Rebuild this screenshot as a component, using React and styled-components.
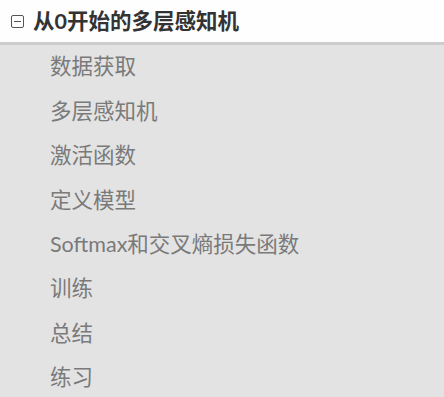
import React from "react";
import styled, { createGlobalStyle } from "styled-components";

const Global = createGlobalStyle`
  html, body { margin: 0; padding: 0; background: #e3e3e3; }
  body { font-family: "Lato", "Noto Sans CJK SC", sans-serif; }
`;

const Panel = styled.div`
  width: 444px;
  height: 397px;
  background: #e3e3e3;
  overflow: hidden;
  display: flex;
  flex-direction: column;
`;

const Header = styled.div`
  flex: none;
  height: 42px;
  background: #fefefe;
  border-bottom: 3px solid #cdcdcd;
  display: flex;
  align-items: center;
  padding-left: 11px;
  gap: 9px;
  box-sizing: content-box;
`;

const Toggle = styled.span`
  width: 11px;
  height: 11px;
  border: 1px solid #555;
  border-radius: 2px;
  position: relative;
  flex: none;
  margin-top: 1px;
  &::after {
    content: "";
    position: absolute;
    left: 2px;
    right: 2px;
    top: 5px;
    height: 1px;
    background: #555;
  }
`;

const Title = styled.span`
  font-family: "Lato", "Noto Sans CJK SC", sans-serif;
  font-size: 21.5px;
  font-weight: 700;
  color: #333;
  line-height: 1;
  margin-top: 1px;
`;

const List = styled.ul`
  flex: none;
  list-style: none;
  margin: 0;
  padding: 0 0 0 50px;
`;

const Item = styled.li`
  height: 44.36px;
  display: flex;
  align-items: center;
  font-size: 21.5px;
  line-height: 1;
  color: #7a7a7a;
`;

const items = [
  "数据获取",
  "多层感知机",
  "激活函数",
  "定义模型",
  "Softmax和交叉熵损失函数",
  "训练",
  "总结",
  "练习",
];

export default function App() {
  return (
    <Panel>
      <Global />
      <Header>
        <Toggle />
        <Title>从0开始的多层感知机</Title>
      </Header>
      <List>
        {items.map((t) => (
          <Item key={t}>{t}</Item>
        ))}
      </List>
    </Panel>
  );
}
